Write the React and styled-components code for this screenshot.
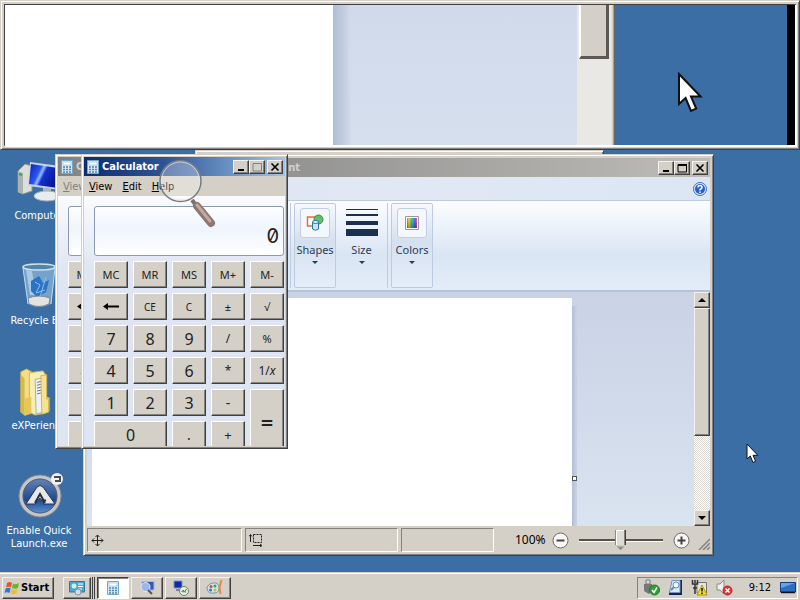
import React from 'react';
import styled, { createGlobalStyle, css } from 'styled-components';

const ui = '"DejaVu Sans Condensed", "DejaVu Sans", sans-serif';
const ribbonFont = '"Noto Sans", "Open Sans", sans-serif';

const GlobalStyle = createGlobalStyle`
  *, *::before, *::after { box-sizing: border-box; }
  body { margin: 0; font: 11px/14px ${ui}; font-stretch: condensed; color: #000; }
  button, input { font: inherit; color: inherit; margin: 0; }
  svg { display: block; flex: none; }
`;

const raised = css`
  border: 1px solid;
  border-color: #f4f2ee #404040 #404040 #f4f2ee;
  box-shadow: inset -1px -1px #85827c;
`;

const Screen = styled.div`
  display: flex;
  flex-direction: column;
  height: 100vh;
  min-height: 600px;
  overflow: hidden;
  background: #3a6ea5;
`;

/* magnifier strip */
const Lens = styled.section`
  position: relative;
  z-index: 2;
  display: flex;
  flex: 0 0 150px;
  padding: 3px 2px 2px 3px;
  border: 1px solid;
  border-color: #d4d0c8 #404040 #404040 #d4d0c8;
  box-shadow: inset 1px 1px #fff, inset -1px -1px #808080;
  background: #d4d0c8;
`;
const LensView = styled.div`
  display: flex;
  flex: 1;
  border: solid;
  border-width: 1px 2px 2px 1px;
  border-color: #404040 #fff #fff #404040;
  background: #3a6ea5;
`;
const LensPaper = styled.div`flex: 328; background: #fff;`;
const LensCanvas = styled.div`
  flex: 244;
  background: linear-gradient(90deg, #b0bdd4, #c0cbdf 4%, #d1daea 7%, transparent 8%), linear-gradient(#d1daea, #d6dfee);
`;
const LensScroll = styled.div`flex: 32; background: #e9e8e4;`;
const LensThumb = styled.div`
  height: 54px;
  margin-left: 2px;
  background: #d4d0c8;
  border: solid;
  border-width: 0 3px 3px 2px;
  border-color: #fff #5c5954 #5c5954 #fff;
`;
const LensEdge = styled.div`flex: 6; background: linear-gradient(90deg, #e9e8e4 30%, #d4d0c8 60%, #4b4b4b);`;
const LensDesk = styled.div`
  flex: 172;
  & > svg { margin: 67px 0 0 62px; }
`;
const LensEnd = styled.div`flex: 8; background: #000;`;

/* desktop */
const Desktop = styled.main`
  position: relative;
  flex: 1;
  min-height: 0;
  padding-top: 8px;
`;
const Shortcuts = styled.ul`
  display: flex;
  flex-direction: column;
  list-style: none;
  margin: 0;
  padding: 0;
  width: 78px;
`;
const Shortcut = styled.li`
  display: flex;
  flex-direction: column;
  align-items: center;
  height: 105px;
  line-height: 13px;
  text-align: center;
  white-space: pre-line;
  color: #fff;
`;
const ShortcutLabel = styled.span`margin-top: 3px;`;

/* windows */
const Frame = styled.section`
  position: absolute;
  display: flex;
  flex-direction: column;
  left: ${(p) => p.$x}px;
  top: ${(p) => p.$y}px;
  width: ${(p) => p.$w}px;
  height: ${(p) => p.$h}px;
  padding: ${(p) => p.$pad || 2}px;
  background: #d4d0c8;
  border: 1px solid;
  border-color: #d4d0c8 #404040 #404040 #d4d0c8;
  box-shadow: inset 1px 1px #fff, inset -1px -1px #808080;
  overflow: hidden;
`;
const TitleBar = styled.header`
  display: flex;
  align-items: center;
  flex: 0 0 19px;
  padding: 0 2px;
  gap: 2px;
  background: ${(p) => (p.$active ? 'linear-gradient(90deg, #0f2b70, #2d5596 40%, #a0c4ec)' : 'linear-gradient(90deg, #808080, #bdbcb8)')};
`;
const TitleText = styled.h2`
  flex: 1;
  margin: 0;
  font: bold 11px/16px ${ui};
  font-stretch: condensed;
  color: ${(p) => (p.$active ? '#fff' : '#d4d0c8')};
`;
const PaintTitle = styled(TitleText)`
  padding-left: 126px;
`;
const CaptionButtons = styled.div`display: flex;`;
const Caption = styled.button`
  display: grid;
  place-items: center;
  width: 16px;
  height: 14px;
  padding: 0;
  background: #d4d0c8;
  ${raised}
  &:last-child { margin-left: 2px; }
`;

const Menu = styled.nav`
  display: flex;
  align-items: center;
  gap: 10px;
  flex: 0 0 20px;
  padding: 1px 0 0 5px;
`;
const MenuItem = styled.button`
  border: 0;
  padding: 0;
  background: none;
  color: ${(p) => (p.$dim ? '#808080' : '#000')};
  &::first-letter { text-decoration: underline; }
`;
const CalcBody = styled.div`
  flex: 1;
  min-height: 0;
  padding: 10px 1px 0 10px;
  background: linear-gradient(#fafbfe, #dfe5f2 30%, #dde4f2);
  overflow: hidden;
`;
const Display = styled.input`
  display: block;
  width: 100%;
  height: 50px;
  margin-bottom: 5px;
  padding: 10px 4px 0 4px;
  text-align: right;
  font: 20px/24px Inter, sans-serif;
  font-feature-settings: "zero" 1;
  color: #222;
  border: 1px solid #8c9ab0;
  border-radius: 3px;
  background: linear-gradient(#fdfeff, #eff5fd 45%, #fff);
`;
const Keys = styled.div`
  display: grid;
  grid-template-columns: repeat(5, 1fr);
  grid-auto-rows: 27px;
  gap: 5px;
`;
const Key = styled.button`
  padding: 0;
  background: #d4d0c8;
  ${raised}
  border-left-color: #fff;
  border-top-color: #fff;
  font: ${(p) => (p.$size || 11)}px/20px ${ribbonFont};
  color: #222;
  ${(p) => p.$wide && 'grid-column: span 2;'}
  ${(p) => p.$tall && 'grid-row: span 2; padding-top: 6px; font-weight: 600;'}
  svg { margin: 0 auto; }
`;

/* paint */
const Tabs = styled.div`
  display: flex;
  justify-content: flex-end;
  align-items: center;
  flex: 0 0 24px;
  padding-right: 3px;
  background: linear-gradient(90deg, #d6e3f2, #e2e8f3 45%, #dce6f3);
  border-bottom: 1px solid #bccbe0;
`;
const IconButton = styled.button`
  display: block;
  padding: 0;
  border: 0;
  background: none;
`;
const Ribbon = styled.div`
  display: flex;
  flex: 0 0 91px;
  gap: 3px;
  padding: 2px 0 2px 203px;
  background: linear-gradient(#fbfdff, #e9f0fa 35%, #dae5f3 60%, #e3edf9);
  border-bottom: 2px solid #b3c2d9;
`;
const Divider = styled.span`width: 1px; background: #bccbe0;`;
const Tool = styled.button`
  display: flex;
  flex-direction: column;
  align-items: center;
  width: ${(p) => (p.$boxed ? 42 : 45)}px;
  padding: 4px 0 0;
  border: 1px solid ${(p) => (p.$boxed ? '#bccbe1' : 'transparent')};
  border-radius: 2px;
  background: ${(p) => (p.$boxed ? 'linear-gradient(#f6f9fd, #d5e0ef 45%, #e4eefa)' : 'none')};
  font: 11px/16px ${ribbonFont};
  color: #2b3c57;
`;
const Swatch = styled.span`
  display: grid;
  place-items: center;
  width: 30px;
  height: 30px;
  margin-bottom: 4px;
  border: 1px solid #c0cfe4;
  border-radius: 3px;
  background: #f4f8fd;
`;
const Lines = styled.span`height: 30px; margin-bottom: 4px;`;
const Arrow = styled.span`
  margin-top: 3px;
  border: 3px solid transparent;
  border-top-color: #2b3c57;
  border-bottom: 0;
`;
const Workspace = styled.div`
  display: flex;
  flex: 1;
  min-height: 0;
  background: linear-gradient(#c9d3e5, #d1daea 50%, #dae4f0);
`;
const Stage = styled.div`flex: 1; display: flex; padding: 6px 0 0 5px;`;
const Paper = styled.div`width: 480px; background: #fff;`;
const PaperEdge = styled.div`
  display: flex;
  align-items: center;
  width: 5px;
  margin-top: 8px;
  padding-top: 124px;
  background: linear-gradient(90deg, #b2bed5, #c9d3e6);
`;
const Handle = styled.span`width: 5px; height: 5px; border: 1px solid #555; background: #fff;`;
const Scrollbar = styled.div`
  display: flex;
  flex-direction: column;
  width: 16px;
  background: repeating-conic-gradient(#fff 0 25%, #d9d6cf 0 50%) 0 0 / 2px 2px;
`;
const ScrollButton = styled.button`
  display: grid;
  place-items: center;
  flex: 0 0 16px;
  padding: 0;
  background: #d4d0c8;
  ${raised}
`;
const ScrollThumb = styled.div`flex: 0 0 128px; background: #d4d0c8; ${raised}`;
const ScrollGap = styled.div`flex: 1;`;
const StatusBar = styled.footer`
  display: flex;
  align-items: center;
  gap: 3px;
  flex: 0 0 26px;
  padding-top: 2px;
`;
const StatusCell = styled.div`
  display: flex;
  align-items: center;
  width: ${(p) => p.$w}px;
  height: 24px;
  padding-left: 3px;
  border: 1px solid;
  border-color: #85827c #fff #fff #85827c;
`;
const Zoom = styled.div`
  display: flex;
  align-items: center;
  flex: 1;
  gap: 6px;
  padding-left: 18px;
`;
const ZoomLabel = styled.label`font: 12px/16px ${ribbonFont};`;
const Slider = styled.input`
  appearance: none;
  width: 84px;
  height: 20px;
  margin: 0 4px;
  background: linear-gradient(transparent 9px, #55524e 9px 11px, #fff 11px 12px, transparent 12px);
  &::-webkit-slider-thumb {
    appearance: none;
    width: 11px;
    height: 20px;
    border: 0;
    background:
      linear-gradient(90deg, #85827c 1px, #fff 1px 2px, transparent 2px 9px, #85827c 9px 10px, #404040 10px) 0 0 / 11px 15px no-repeat,
      linear-gradient(#fff 1px, #dedbd5 1px 15px, #85827c 18px);
    clip-path: polygon(0 0, 100% 0, 100% 75%, 50% 100%, 0 75%);
  }
`;
const Grip = styled.div`margin-top: 8px;`;

/* taskbar */
const Taskbar = styled.footer`
  position: relative;
  z-index: 2;
  display: flex;
  align-items: center;
  flex: 0 0 28px;
  gap: 2px;
  padding: 2px 2px 0;
  background: #d4d0c8;
  border-top: 1px solid #d4d0c8;
  box-shadow: inset 0 1px #fff;
`;
const Start = styled.button`
  display: flex;
  align-items: center;
  gap: 1px;
  width: 52px;
  height: 22px;
  margin-right: 7px;
  padding: 0 1px;
  background: #d4d0c8;
  font-weight: bold;
  white-space: nowrap;
  ${raised}
`;
const Task = styled.button`
  display: grid;
  place-items: center;
  width: 32px;
  height: 22px;
  padding: 0;
  background: #d4d0c8;
  ${raised}
  ${(p) => p.$group && 'width: 28px;'}
  ${(p) => p.$pressed && 'background: #fff; border-color: #404040 #fff #fff #404040; box-shadow: inset 1px 1px #85827c;'}
`;
const Stack = styled.span`
  width: 3px;
  height: 22px;
  border: solid;
  border-width: 0 1px;
  border-color: #404040;
  margin-left: -1px;
`;
const Tray = styled.div`
  display: flex;
  align-items: center;
  gap: 8px;
  height: 22px;
  margin-left: auto;
  padding: 0 1px 0 5px;
  border: 1px solid;
  border-color: #85827c #fff #fff #85827c;
`;
const Clock = styled.time`margin: 0 1px 0 8px;`;

const Overlay = styled.div`
  position: absolute;
  left: ${(p) => p.$x}px;
  top: ${(p) => p.$y}px;
  pointer-events: none;
`;

const Cursor = ({ scale = 1 }) => (
  <svg width={13 * scale} height={21 * scale} viewBox="0 0 13 21">
    <path d="M1 1V16L4.300 13L7 19.500L9.600 18.300L7 12.300H11.800Z" fill="#fff" stroke="#111" strokeWidth="1" />
  </svg>
);

const ComputerIcon = () => (
  <svg width="48" height="48" viewBox="0 0 48 48">
    <defs>
      <linearGradient id="screen" x1="0" y1="0" x2="1" y2="0.4"><stop stopColor="#0a1ec0" /><stop offset="0.4" stopColor="#2c55ee" /><stop offset="0.5" stopColor="#93bcff" /><stop offset="0.6" stopColor="#1430d0" /><stop offset="1" stopColor="#09189a" /></linearGradient>
    </defs>
    <path d="M3 13L10 6L17 8V33L8 36L3 34Z" fill="#dcdfd9" stroke="#8c9894" />
    <path d="M3 13L8 15V36L3 34Z" fill="#abb3ae" /><path d="M4 16l3 1" stroke="#2fae34" strokeWidth="2" />
    <path d="M15 4L45 8V32L13 28Z" fill="#c8d3e0" /><path d="M16 6L43 10V30L14 26Z" fill="url(#screen)" />
    <path d="M28 30H36V36H28Z" fill="#adb9c2" /><ellipse cx="32" cy="38" rx="13" ry="5" fill="#e8edef" stroke="#a5b0b6" />
  </svg>
);
const BinIcon = () => (
  <svg width="48" height="48" viewBox="0 0 48 48">
    <path d="M8 4L13 41Q24 47 36 41L40 4Z" fill="#8db8dc" fillOpacity="0.7" />
    <path d="M11 7L15 32H21L17 8Z" fill="#d5eafa" opacity="0.55" />
    <path d="M16 18l8-5 4 7 6-3-3 12-9 5-6-6Z" fill="#2b73c4" /><path d="M20 19l5 3-4 8 9-3M31 14L25 34" stroke="#8bc0ed" fill="none" />
    <path d="M13 35Q24 31 35 35L34 41Q24 46 14 41Z" fill="#e5e3dd" stroke="#789" />
    <ellipse cx="24" cy="4" rx="16" ry="3" fill="#5385ab" stroke="#d2e2ee" strokeWidth="1.500" />
    <path d="M8 5L13 41M40 5L36 41" stroke="#c2ddf0" />
  </svg>
);
const FolderIcon = () => (
  <svg width="48" height="48" viewBox="0 0 48 50">
    <path d="M5 4L11 1L18 5V47L9 49L5 46Z" fill="#f3de88" stroke="#c7a93e" />
    <path d="M14 5L28 3L31 7V47L20 49L14 46Z" fill="#f9edaf" stroke="#d0b657" />
    <path d="M20 12L28 10V46L21 48Z" fill="#eef1f4" stroke="#a4abb1" /><path d="M22 15l4-1M22 18l4-1M22 21l4-1M22 24l4-1M22 27l4-1" stroke="#68737c" />
    <path d="M5 7L9 11V49L5 46Z" fill="#d7b949" /><path d="M9 32L16 30V47L9 50ZM29 29L35 31V45L30 47Z" fill="#e5c75a" />
    <path d="M26 8L32 7V32L34 33V46L27 48Z" fill="#f5e293" stroke="#d1b54f" />
  </svg>
);
const LaunchIcon = () => (
  <svg width="48" height="48" viewBox="0 0 48 48">
    <defs><linearGradient id="orb" x1="0" y1="0" x2="0" y2="1"><stop stopColor="#6b88b8" /><stop offset="0.6" stopColor="#20498f" /><stop offset="1" stopColor="#6599db" /></linearGradient></defs>
    <circle cx="25" cy="23" r="19" fill="url(#orb)" stroke="#c3c6c8" strokeWidth="4" /><circle cx="25" cy="23" r="17" fill="none" stroke="#4b5967" /><circle cx="25" cy="23" r="21" fill="none" stroke="#87898c" />
    <path d="M11 31L22 14Q25 11 28 14L40 31H28L31 27H26L25 25L20 31Z" fill="#e7e7e7" stroke="#253454" /><path d="M20 30L25 21L30 30" fill="none" stroke="#232c3b" strokeWidth="2" />
    <circle cx="42" cy="6" r="6" fill="#f2f2f2" /><path d="M39 4H45V8H40" fill="none" stroke="#444d5b" strokeWidth="2" />
  </svg>
);
const CalcIcon = () => (
  <svg width="14" height="16" viewBox="0 0 14 16">
    <path d="M1.500 1.500H12.500V14.500H1.500Z" fill="#d7eaf4" stroke="#74a8c9" /><path d="M3 3H11V6H3Z" fill="#fff" stroke="#8ab2cc" strokeWidth="0.500" />
    <path d="M3 8h2m1 0h2m1 0h2M3 10.500h2m1 0h2m1 0h2M3 13h2m1 0h2m1 0h2" stroke="#4788b6" strokeWidth="1.500" />
  </svg>
);
const MinGlyph = () => <svg width="12" height="10"><path d="M3 7H9V9H3Z" /></svg>;
const MaxGlyph = ({ dim }) => <svg width="12" height="10"><path d="M2 1.500H10.500V9H2Z" fill="none" stroke={dim ? '#85827c' : '#000'} />{!dim && <path d="M2 1H11V3H2Z" />}</svg>;
const CloseGlyph = () => <svg width="12" height="10"><path d="M2.500 1.500L9.500 8.500M9.500 1.500L2.500 8.500" stroke="#000" strokeWidth="1.600" /></svg>;

function WindowButtons({ fixed }) {
  return (
    <CaptionButtons>
      <Caption aria-label="Minimize"><MinGlyph /></Caption>
      <Caption aria-label="Maximize" disabled={fixed}><MaxGlyph dim={fixed} /></Caption>
      <Caption aria-label="Close"><CloseGlyph /></Caption>
    </CaptionButtons>
  );
}

const BackArrow = () => <svg width="18" height="9"><path d="M1 4.500L6 1V3.500H17V5.500H6V8Z" /></svg>;
const keys = [
  ['MC'], ['MR'], ['MS'], ['M+'], ['M-'],
  ['back'], ['CE', 10], ['C', 10], ['±'], ['√'],
  ['7', 16], ['8', 16], ['9', 16], ['/', 12], ['%'],
  ['4', 16], ['5', 16], ['6', 16], ['*', 12], ['1/x', 12],
  ['1', 16], ['2', 16], ['3', 16], ['-', 14], ['=', 22, { $tall: true }],
  ['0', 16, { $wide: true }], ['.', 14], ['+', 13],
];
const keyFace = (k) => (k === 'back' ? <BackArrow /> : k === '1/x' ? <>1/<i>x</i></> : k);

function Calculator({ x, y, active }) {
  return (
    <Frame $x={x} $y={y} $w={207} $h={295} aria-label="Calculator">
      <TitleBar $active={active}>
        <CalcIcon />
        <TitleText $active={active}>Calculator</TitleText>
        <WindowButtons fixed />
      </TitleBar>
      <Menu>
        {['View', 'Edit', 'Help'].map((m) => <MenuItem key={m} $dim={!active}>{m}</MenuItem>)}
      </Menu>
      <CalcBody>
        <Display aria-label="Result" value="0" readOnly />
        <Keys>
          {keys.map(([k, size, span]) => (
            <Key key={k} $size={size} {...span} aria-label={k === 'back' ? 'Backspace' : undefined}>{keyFace(k)}</Key>
          ))}
        </Keys>
      </CalcBody>
    </Frame>
  );
}

const ShapesIcon = () => (
  <svg width="18" height="18" viewBox="0 0 18 18">
    <path d="M1.500 3H10V12H1.500Z" fill="#fff" stroke="#e0703a" strokeWidth="1.500" /><circle cx="12.500" cy="5.500" r="4.500" fill="#63bd69" stroke="#2e8d3d" />
    <path d="M6.500 8V15Q9.500 17.500 12.500 15V8" fill="#c8e6f8" stroke="#2574a8" /><ellipse cx="9.500" cy="8" rx="3" ry="1.500" fill="#e9f6fd" stroke="#2574a8" />
  </svg>
);
const ColorsIcon = () => (
  <svg width="14" height="14" viewBox="0 0 14 14">
    <defs>
      <linearGradient id="hue"><stop stopColor="#f22c28" /><stop offset="0.2" stopColor="#e6dd20" /><stop offset="0.4" stopColor="#21bd37" /><stop offset="0.6" stopColor="#2393dd" /><stop offset="0.8" stopColor="#4634d6" /><stop offset="1" stopColor="#e12bb6" /></linearGradient>
      <linearGradient id="shade" x1="0" y1="0" x2="0" y2="1"><stop stopColor="#fff" stopOpacity="0.2" /><stop offset="1" stopColor="#333" stopOpacity="0.3" /></linearGradient>
    </defs>
    <path d="M0.500 0.500H13.500V13.500H0.500Z" fill="#fff" stroke="#999" /><path d="M2 2H12V12H2Z" fill="url(#hue)" /><path d="M2 2H12V12H2Z" fill="url(#shade)" />
  </svg>
);
const ZoomGlyph = ({ plus }) => (
  <svg width="17" height="17" viewBox="0 0 17 17">
    <circle cx="8.500" cy="8.500" r="7.500" fill="#f7f6f4" stroke="#6c6966" /><path d={plus ? 'M4.500 8.500H12.500M8.500 4.500V12.500' : 'M4.500 8.500H12.500'} stroke="#444" strokeWidth="2" />
  </svg>
);

function Paint() {
  return (
    <Frame $x={83} $y={4} $w={631} $h={402} $pad={3} aria-label="Paint">
      <TitleBar>
        <PaintTitle>Untitled - Paint</PaintTitle>
        <WindowButtons />
      </TitleBar>
      <Tabs>
        <IconButton aria-label="Help">
          <svg width="14" height="14" viewBox="0 0 14 14">
            <circle cx="7" cy="7" r="6.500" fill="#dce9fa" stroke="#3a70cf" /><circle cx="7" cy="7" r="5" fill="#2360cc" />
            <path d="M5 5.500Q5 3.500 7 3.500T9 5.500Q9 6.500 7 7.500V8.500M7 9.500V11" fill="none" stroke="#fff" strokeWidth="1.500" />
          </svg>
        </IconButton>
      </Tabs>
      <Ribbon>
        <Divider />
        <Tool $boxed><Swatch><ShapesIcon /></Swatch>Shapes<Arrow /></Tool>
        <Tool>
          <Lines><svg width="32" height="30"><path d="M0 1H32V2H0ZM0 6H32V8H0ZM0 13H32V17H0ZM0 21H32V28H0Z" fill="#1c3050" /></svg></Lines>
          Size<Arrow />
        </Tool>
        <Divider />
        <Tool $boxed><Swatch><ColorsIcon /></Swatch>Colors<Arrow /></Tool>
      </Ribbon>
      <Workspace>
        <Stage>
          <Paper />
          <PaperEdge><Handle /></PaperEdge>
        </Stage>
        <Scrollbar>
          <ScrollButton aria-label="Scroll up"><svg width="8" height="4"><path d="M0 4L4 0L8 4Z" /></svg></ScrollButton>
          <ScrollThumb />
          <ScrollGap />
          <ScrollButton aria-label="Scroll down"><svg width="8" height="4"><path d="M0 0H8L4 4Z" /></svg></ScrollButton>
        </Scrollbar>
      </Workspace>
      <StatusBar>
        <StatusCell $w={155}>
          <svg width="13" height="13" viewBox="0 0 13 13"><path d="M6.500 1V12M1 6.500H12M4.500 3L6.500 1L8.500 3M4.500 10L6.500 12L8.500 10M3 4.500L1 6.500L3 8.500M10 4.500L12 6.500L10 8.500" fill="none" stroke="#222" /></svg>
        </StatusCell>
        <StatusCell $w={153}>
          <svg width="14" height="14" viewBox="0 0 14 14"><path d="M4.500 1.500H12.500V9.500H4.500Z" fill="none" stroke="#222" strokeDasharray="2 1" /><path d="M1.500 9V2M0 3.500L1.500 1.500L3 3.500M4 12.500H12M11 11L13 12.500L11 14" fill="none" stroke="#222" /></svg>
        </StatusCell>
        <StatusCell $w={93} />
        <Zoom>
          <ZoomLabel htmlFor="zoom">100%</ZoomLabel>
          <IconButton aria-label="Zoom out"><ZoomGlyph /></IconButton>
          <Slider id="zoom" type="range" min="0" max="100" defaultValue="50" />
          <IconButton aria-label="Zoom in"><ZoomGlyph plus /></IconButton>
        </Zoom>
        <Grip><svg width="12" height="12"><path d="M1 12L12 1M5 12L12 5M9 12L12 9" stroke="#85827c" strokeWidth="1.500" /></svg></Grip>
      </StatusBar>
    </Frame>
  );
}

const Flag = () => (
  <svg width="16" height="16" viewBox="0 0 16 16">
    <path d="M3 3Q5.500 1 8 3L7 7.500Q4.500 6 2 7.500Z" fill="#e8572b" /><path d="M9 3.500Q12 5 15 3L14 8Q11 9.500 8 8Z" fill="#6ab42d" />
    <path d="M1.700 8.500Q4.500 7 6.700 8.500L5.500 13Q3 11.500 0.500 13Z" fill="#2f77d1" /><path d="M7.700 9Q10.500 10.500 13.700 9L12.500 13.500Q9.500 15 6.500 13.500Z" fill="#f6bd24" />
  </svg>
);
const PanelIcon = () => (
  <svg width="16" height="16" viewBox="0 0 16 16"><path d="M0.500 1.500H15.500V12H0.500Z" fill="#48a6d8" stroke="#2a79a8" /><circle cx="5" cy="6" r="2.500" fill="#d7f0d0" /><path d="M9 4h5M9 6.500h5M9 9h4" stroke="#fff" /><ellipse cx="9" cy="12" rx="3" ry="3" fill="#d6dde1" stroke="#89959c" /></svg>
);
const LensIcon = () => (
  <svg width="16" height="16" viewBox="0 0 16 16"><path d="M3 1.500H15V10H3Z" fill="#3556bd" stroke="#a6b7d8" /><circle cx="6.500" cy="7" r="4.500" fill="#9bb8e4" stroke="#e1e8f3" /><path d="M9 10L13 14" stroke="#555" strokeWidth="2" /></svg>
);
const RemoteIcon = () => (
  <svg width="16" height="16" viewBox="0 0 16 16"><path d="M1 1H9V8H1Z" fill="#1229a5" stroke="#7d93d1" /><path d="M3 10H8" stroke="#526" /><circle cx="11" cy="11" r="4.500" fill="#e8f2e2" stroke="#71806e" /><path d="M8.500 12L10.500 10L10 12.500M13.500 9L11.500 12H13" stroke="#198935" fill="none" /></svg>
);
const PaintIcon = () => (
  <svg width="18" height="17" viewBox="0 0 18 17"><path d="M7 4Q1 5 1 10Q2 15 8 14Q13 14 13 9Q13 3 7 4Z" fill="#c9e6ec" stroke="#6d9ba7" /><circle cx="5" cy="7.500" r="1.500" fill="#d7473b" /><circle cx="9" cy="7" r="1.500" fill="#3ba444" /><circle cx="4.500" cy="11" r="1.500" fill="#3570c8" /><circle cx="9" cy="11" r="1.500" fill="#e6b52d" /><path d="M15.500 1L13.500 8L14.500 15" fill="none" stroke="#ed883b" strokeWidth="2" /></svg>
);
const TrayUsb = () => <svg width="17" height="17" viewBox="0 0 17 17"><path d="M3 1H7V5H3Z" fill="#ddd" stroke="#777" /><path d="M1 5H9V12L6 15L1 12Z" fill="#777" /><circle cx="11.500" cy="11" r="5" fill="#2fa036" stroke="#207a28" /><path d="M9 11L11 13.500L14 8.500" fill="none" stroke="#fff" strokeWidth="1.500" /></svg>;
const TraySearch = () => <svg width="15" height="17" viewBox="0 0 15 17"><path d="M5 1H14V16H1V12L3 11V4Z" fill="#182657" /><path d="M4 1.500H12V13.500H1.500Z" fill="#d7e9fa" stroke="#7995b8" /><circle cx="8" cy="6" r="3" fill="#eef8ff" stroke="#5d8dbe" /><path d="M6 8L3 11" stroke="#5d8dbe" strokeWidth="2" /></svg>;
const TrayNet = () => <svg width="17" height="17" viewBox="0 0 17 17"><path d="M6 3.500H15.500V14H6Z" fill="#e7e5df" stroke="#77746c" /><path d="M1.500 1V5H6.500V1M4 1V4M4 5V15M2 9H6" stroke="#333" fill="none" strokeWidth="1.500" /><path d="M11 6L16 16H6Z" fill="#f4df26" stroke="#ab9414" /><path d="M11 9V12.500M11 13.500V15" stroke="#111" strokeWidth="1.500" /></svg>;
const TrayVolume = () => <svg width="17" height="17" viewBox="0 0 17 17"><path d="M1 5H4L8 1V15L4 11H1Z" fill="#f0efed" stroke="#8b8984" /><circle cx="11.500" cy="11.500" r="4.500" fill="#dd3539" stroke="#b82328" /><path d="M9.500 9.500L13.500 13.500M13.500 9.500L9.500 13.500" stroke="#fff" strokeWidth="1.500" /></svg>;
const TrayDesk = () => <svg width="16" height="15" viewBox="0 0 16 15"><path d="M0.500 2.500H15.500V12H0.500Z" fill="#2c6ec4" stroke="#183e7a" /><path d="M1 3H15L1 8Z" fill="#65a4e8" /><path d="M1 12.500H15" stroke="#112" strokeWidth="1.500" /></svg>;

export default function App() {
  return (
    <Screen>
      <GlobalStyle />
      <Lens aria-label="Magnifier">
        <LensView>
          <LensPaper />
          <LensCanvas />
          <LensScroll><LensThumb /></LensScroll>
          <LensEdge />
          <LensDesk><Cursor scale={2} /></LensDesk>
          <LensEnd />
        </LensView>
      </Lens>
      <Desktop>
        <Shortcuts>
          <Shortcut><ComputerIcon /><ShortcutLabel>Computer</ShortcutLabel></Shortcut>
          <Shortcut><BinIcon /><ShortcutLabel>Recycle Bin</ShortcutLabel></Shortcut>
          <Shortcut><FolderIcon /><ShortcutLabel>eXPerience</ShortcutLabel></Shortcut>
          <Shortcut><LaunchIcon /><ShortcutLabel>{'Enable Quick\nLaunch.exe'}</ShortcutLabel></Shortcut>
        </Shortcuts>
        <Frame $x={195} $y={0} $w={409} $h={60} />
        <Paint />
        <Calculator x={55} y={4} />
        <Calculator x={81} y={4} active />
        <Overlay $x={158} $y={9}>
          <svg width="60" height="70" viewBox="0 0 60 70">
            <circle cx="22.500" cy="22" r="20.500" fill="#fff" fillOpacity="0.3" stroke="#777c80" strokeWidth="1.500" /><circle cx="22.500" cy="22" r="19" fill="none" stroke="#e6e6e3" strokeOpacity="0.7" />
            <path d="M34 41L40 49" stroke="#777370" strokeWidth="4" /><path d="M39 47L53 64" stroke="#8d7770" strokeWidth="8" strokeLinecap="round" /><path d="M39 46L52 62" stroke="#c4aaa0" strokeWidth="3" strokeLinecap="round" />
          </svg>
        </Overlay>
        <Overlay $x={746} $y={293}><Cursor /></Overlay>
      </Desktop>
      <Taskbar>
        <Start><Flag />Start</Start>
        <Task $group aria-label="Control Panel"><PanelIcon /></Task>
        <Stack />
        <Task $pressed aria-label="Calculator"><CalcIcon /></Task>
        <Task aria-label="Magnifier"><LensIcon /></Task>
        <Task aria-label="Remote Desktop"><RemoteIcon /></Task>
        <Task aria-label="Paint"><PaintIcon /></Task>
        <Tray>
          <TrayUsb /><TraySearch /><TrayNet /><TrayVolume />
          <Clock>9:12</Clock>
          <TrayDesk />
        </Tray>
      </Taskbar>
    </Screen>
  );
}
